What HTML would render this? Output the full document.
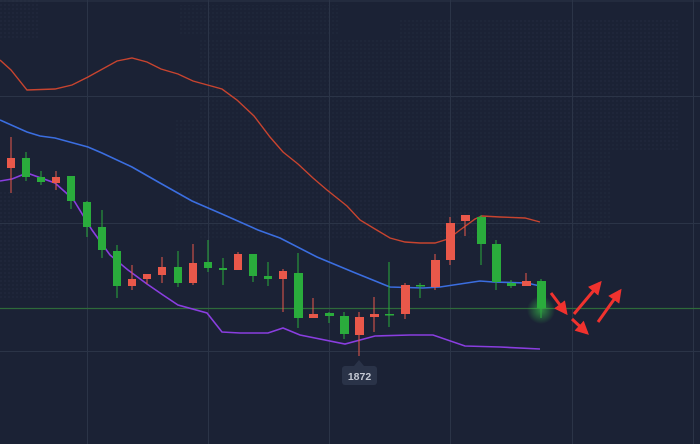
<!DOCTYPE html>
<html><head><style>
html,body{margin:0;padding:0;background:#1b2235;}
svg{display:block}
</style></head><body>
<svg width="700" height="444" viewBox="0 0 700 444" xmlns="http://www.w3.org/2000/svg">
<defs>
<marker id="ah" viewBox="0 0 10 10" refX="8" refY="5" markerWidth="4.5" markerHeight="4.5" orient="auto">
<path d="M0,0 L10,5 L0,10 Z" fill="#f0322e"/>
</marker>
<radialGradient id="glow"><stop offset="0" stop-color="#3ad24a" stop-opacity="0.6"/><stop offset="1" stop-color="#3ad24a" stop-opacity="0"/></radialGradient>
<pattern id="dots" width="4" height="4" patternUnits="userSpaceOnUse"><rect width="2" height="2" fill="#232b3f"/></pattern>
</defs>
<rect width="700" height="444" fill="#1b2235"/>
<g fill="url(#dots)" opacity="0.45">
<rect x="180" y="5" width="160" height="30"/>
<rect x="200" y="40" width="200" height="200"/>
<rect x="175" y="120" width="60" height="110"/>
<rect x="400" y="20" width="280" height="130"/>
<rect x="430" y="150" width="180" height="90"/>
<rect x="0" y="190" width="60" height="110"/>
<rect x="0" y="0" width="40" height="40"/>
</g>
<g stroke="#2b3447" stroke-width="1">
<line x1="0" y1="1" x2="700" y2="1"/>
<line x1="0" y1="96.5" x2="700" y2="96.5"/>
<line x1="0" y1="223.5" x2="700" y2="223.5"/>
<line x1="0" y1="351.5" x2="700" y2="351.5"/>
<line x1="87.5" y1="0" x2="87.5" y2="444"/>
<line x1="208.5" y1="0" x2="208.5" y2="444"/>
<line x1="329.5" y1="0" x2="329.5" y2="444"/>
<line x1="450.5" y1="0" x2="450.5" y2="444"/>
<line x1="572.5" y1="0" x2="572.5" y2="444"/>
<line x1="693.5" y1="0" x2="693.5" y2="444"/>
</g>
<line x1="0" y1="308.5" x2="700" y2="308.5" stroke="#2e6a3a" stroke-width="1.2"/>
<polyline fill="none" stroke="#c8442f" stroke-width="1.4" points="0,60 11,70 27,90 55,89 72,85 88,77 117,61 132,58 147,62 161,69 178,74 193,81 222,89 237,100 254,116 270,137 283,152 298,164 313,178 327,190 347,206 360,220 375,229 390,238 405,242 420,243 435,243 448,239 460,230 475,219 482,216 500,217 525,218 540,222"/>
<polyline fill="none" stroke="#3b6ee0" stroke-width="1.6" points="0,120 27,132 40,136 55,138 88,147 102,153 132,167 160,183 192,201 222,214 258,230 280,238 317,257 353,272 390,287 423,288 440,287 480,281 493,282 527,283 540,286"/>
<polyline fill="none" stroke="#8a3ee0" stroke-width="1.6" points="0,181 12,179 27,173 55,183 73,199 92,230 110,255 128,270 147,284 163,295 178,305 207,313 222,332 240,333 268,333 283,328 300,335 345,344 375,336 410,335 433,335 465,346 500,347 540,349"/>
<circle cx="541" cy="310" r="14" fill="url(#glow)"/>
<g stroke-width="1">
<g fill="#e9584a" stroke="#e9584a">
<line x1="11" y1="137" x2="11" y2="193"/><rect x="7" y="158" width="8" height="10" stroke="none"/>
<line x1="56" y1="171" x2="56" y2="190"/><rect x="52" y="177" width="8" height="6" stroke="none"/>
<line x1="132" y1="265" x2="132" y2="290"/><rect x="128" y="279" width="8" height="7" stroke="none"/>
<line x1="147" y1="275" x2="147" y2="284"/><rect x="143" y="274" width="8" height="5" stroke="none"/>
<line x1="162" y1="257" x2="162" y2="283"/><rect x="158" y="267" width="8" height="8" stroke="none"/>
<line x1="193" y1="244" x2="193" y2="285"/><rect x="189" y="263" width="8" height="20" stroke="none"/>
<line x1="238" y1="252" x2="238" y2="270"/><rect x="234" y="254" width="8" height="16" stroke="none"/>
<line x1="283" y1="269" x2="283" y2="312"/><rect x="279" y="271" width="8" height="8" stroke="none"/>
<line x1="313" y1="298" x2="313" y2="318"/><rect x="309" y="314" width="9" height="4" stroke="none"/>
<line x1="359" y1="312" x2="359" y2="356"/><rect x="355" y="317" width="9" height="18" stroke="none"/>
<line x1="374" y1="297" x2="374" y2="332"/><rect x="370" y="314" width="9" height="3" stroke="none"/>
<line x1="405" y1="283" x2="405" y2="319"/><rect x="401" y="285" width="9" height="29" stroke="none"/>
<line x1="435" y1="254" x2="435" y2="290"/><rect x="431" y="260" width="9" height="27" stroke="none"/>
<line x1="450" y1="217" x2="450" y2="265"/><rect x="446" y="223" width="9" height="37" stroke="none"/>
<line x1="465" y1="215" x2="465" y2="236"/><rect x="461" y="215" width="9" height="6" stroke="none"/>
<line x1="526" y1="273" x2="526" y2="286"/><rect x="522" y="281" width="9" height="5" stroke="none"/>
</g>
<g fill="#2aac3c" stroke="#2aac3c">
<line x1="26" y1="152" x2="26" y2="181"/><rect x="22" y="158" width="8" height="19" stroke="none"/>
<line x1="41" y1="171" x2="41" y2="185"/><rect x="37" y="177" width="8" height="5" stroke="none"/>
<line x1="71" y1="176" x2="71" y2="209"/><rect x="67" y="176" width="8" height="25" stroke="none"/>
<line x1="87" y1="201" x2="87" y2="237"/><rect x="83" y="202" width="8" height="25" stroke="none"/>
<line x1="102" y1="210" x2="102" y2="258"/><rect x="98" y="227" width="8" height="23" stroke="none"/>
<line x1="117" y1="245" x2="117" y2="298"/><rect x="113" y="251" width="8" height="35" stroke="none"/>
<line x1="178" y1="251" x2="178" y2="287"/><rect x="174" y="267" width="8" height="16" stroke="none"/>
<line x1="208" y1="240" x2="208" y2="272"/><rect x="204" y="262" width="8" height="6" stroke="none"/>
<line x1="223" y1="258" x2="223" y2="285"/><rect x="219" y="268" width="8" height="2" stroke="none"/>
<line x1="253" y1="254" x2="253" y2="282"/><rect x="249" y="254" width="8" height="22" stroke="none"/>
<line x1="268" y1="262" x2="268" y2="286"/><rect x="264" y="276" width="8" height="3" stroke="none"/>
<line x1="298" y1="253" x2="298" y2="328"/><rect x="294" y="273" width="9" height="45" stroke="none"/>
<line x1="329" y1="312" x2="329" y2="323"/><rect x="325" y="313" width="9" height="3" stroke="none"/>
<line x1="344" y1="312" x2="344" y2="339"/><rect x="340" y="316" width="9" height="18" stroke="none"/>
<line x1="389" y1="262" x2="389" y2="327"/><rect x="385" y="314" width="9" height="1.5" stroke="none"/>
<line x1="420" y1="283" x2="420" y2="298"/><rect x="416" y="285" width="9" height="1.5" stroke="none"/>
<line x1="481" y1="215" x2="481" y2="265"/><rect x="477" y="217" width="9" height="27" stroke="none"/>
<line x1="496" y1="240" x2="496" y2="290"/><rect x="492" y="244" width="9" height="38" stroke="none"/>
<line x1="511" y1="280" x2="511" y2="288"/><rect x="507" y="283" width="9" height="3" stroke="none"/>
<line x1="541" y1="279" x2="541" y2="318"/><rect x="537" y="281" width="9" height="27" stroke="none"/>
</g>
</g>
<g stroke="#f0322e" stroke-width="3" marker-end="url(#ah)" fill="none">
<line x1="551" y1="293" x2="566" y2="313"/>
<line x1="572" y1="319" x2="587" y2="333"/>
<line x1="574" y1="314" x2="600" y2="283"/>
<line x1="598" y1="322" x2="620" y2="291"/>
</g>
<path d="M354,366 L359,360 L364,366 Z" fill="#2a3348"/>
<rect x="342" y="366" width="35" height="19" rx="3" fill="#2a3348"/>
<text x="359.5" y="380" text-anchor="middle" font-family="Liberation Sans, sans-serif" font-weight="bold" font-size="10.5" fill="#c3c8d3">1872</text>
</svg>
</body></html>
